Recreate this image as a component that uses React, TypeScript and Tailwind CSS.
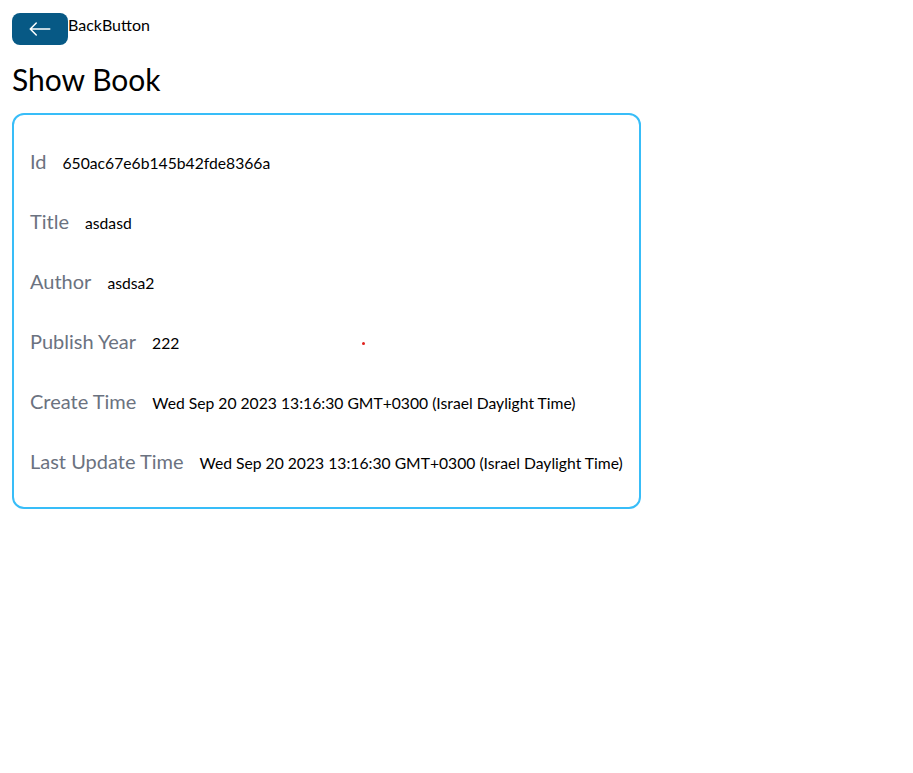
import { BsArrowLeft } from 'react-icons/bs';

const book = {
  _id: '650ac67e6b145b42fde8366a',
  title: 'asdasd',
  author: 'asdsa2',
  publishYear: 222,
  createdAt: 'Wed Sep 20 2023 13:16:30 GMT+0300 (Israel Daylight Time)',
  updatedAt: 'Wed Sep 20 2023 13:16:30 GMT+0300 (Israel Daylight Time)',
};

function BackButton() {
  return (
    <div className="flex">
      <a href="#" className="bg-[#075985] text-white px-4 py-1 rounded-lg w-fit">
        <BsArrowLeft className="text-2xl" />
      </a>
      <span className="text-base leading-6 text-black">BackButton</span>
    </div>
  );
}

function Row({ label, value }: { label: string; value: string | number }) {
  return (
    <div className="my-4 flex items-baseline">
      <span className="text-xl leading-7 mr-4 text-[#6b7280]">{label}</span>
      <span className="text-[15.7px] leading-6 text-black">{value}</span>
    </div>
  );
}

export default function App() {
  return (
    <div className="relative px-3 pt-[13px] font-['Lato',sans-serif]">
      <BackButton />
      <h1 className="text-3xl leading-9 my-4 text-black">Show Book</h1>
      <div className="flex flex-col border-2 border-[#38bdf8] rounded-xl w-fit p-4">
        <Row label="Id" value={book._id} />
        <Row label="Title" value={book.title} />
        <Row label="Author" value={book.author} />
        <Row label="Publish Year" value={book.publishYear} />
        <Row label="Create Time" value={book.createdAt} />
        <Row label="Last Update Time" value={book.updatedAt} />
      </div>
      <div className="absolute left-[362px] top-[342px] w-[3px] h-[3px] rounded-full bg-[#e0201c]" />
    </div>
  );
}
